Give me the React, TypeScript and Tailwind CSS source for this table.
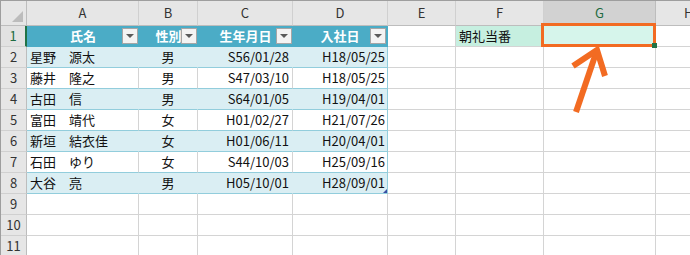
import React from "react";

const cols = ["A", "B", "C", "D", "E", "F", "G", "H"];

const rows = [
  ["星野　源太", "男", "S56/01/28", "H18/05/25"],
  ["藤井　隆之", "男", "S47/03/10", "H18/05/25"],
  ["古田　信", "男", "S64/01/05", "H19/04/01"],
  ["富田　靖代", "女", "H01/02/27", "H21/07/26"],
  ["新垣　結衣佳", "女", "H01/06/11", "H20/04/01"],
  ["石田　ゆり", "女", "S44/10/03", "H25/09/16"],
  ["大谷　亮", "男", "H05/10/01", "H28/09/01"],
];

const headers = ["氏名", "性別", "生年月日", "入社日"];

function FilterButton() {
  return (
    <span className="absolute right-[1px] top-[2px] w-[16px] h-[16px] flex items-center justify-center bg-[#f3f3f3] border border-[#a6a6a6]">
      <span className="w-0 h-0 border-l-[4px] border-r-[4px] border-t-[4px] border-l-transparent border-r-transparent border-t-[#5a5a5a]" />
    </span>
  );
}

function Blank({ last }: { last?: boolean }) {
  return <div className={last ? "border-b border-[#d4d4d4]" : "border-r border-b border-[#d4d4d4]"} />;
}

export default function App() {
  return (
    <div
      className="relative w-[690px] h-[255px] overflow-hidden bg-white text-[13px] text-[#111]"
      style={{ fontFamily: '"Noto Sans CJK JP", "Noto Sans", sans-serif' }}
    >
      <div className="grid grid-cols-[26px_112px_59px_95px_95px_68px_88px_112px_1fr] grid-rows-[25px_repeat(11,21px)] border-t border-l border-[#9e9e9e]">
        {/* corner */}
        <div className="relative bg-[#e6e6e6] border-r border-b border-[#bdbdbd]">
          <svg className="absolute right-[3px] bottom-[3px]" width="11" height="11" viewBox="0 0 11 11">
            <polygon points="11,0 11,11 0,11" fill="#bcbcbc" />
          </svg>
        </div>

        {/* column headers */}
        {cols.map((c) => (
          <div
            key={c}
            className={
              c === "G"
                ? "flex items-center justify-center bg-[#d2d2d2] text-[#1e6b41] border-r border-b border-[#bdbdbd]"
                : c === "H"
                ? "flex items-center justify-start pl-[28px] bg-[#e6e6e6] text-[#333] border-b border-[#bdbdbd]"
                : "flex items-center justify-center bg-[#e6e6e6] text-[#333] border-r border-[#d0d0d0] border-b border-b-[#bdbdbd]"
            }
          >
            {c}
          </div>
        ))}

        {/* row 1 */}
        <div className="flex items-center justify-center bg-[#e2e2e2] text-[#1e6b41] border-b border-[#d0d0d0] border-r-2 border-r-[#217346]">
          1
        </div>
        {headers.map((h, i) => (
          <div
            key={h}
            className={
              "relative flex items-center justify-center bg-[#4bacc6] font-bold text-white border-b border-[#4bacc6] " +
              (i === 3 ? "border-r border-r-[#4bacc6]" : "")
            }
          >
            {h}
            <FilterButton />
          </div>
        ))}
        <Blank />
        <div className="flex items-center pl-[3px] bg-[#c6efe0] border-r border-b border-[#d4d4d4]">朝礼当番</div>
        <div className="relative bg-[#d6f5eb] border-r border-b border-[#d4d4d4]" />
        <Blank last />

        {/* data rows */}
        {rows.map((r, i) => {
          const band = i % 2 === 0;
          const bg = band ? "bg-[#daeef3]" : "bg-white";
          const inner = band ? "border-r border-r-[#daeef3]" : "border-r border-r-[#d4d4d4]";
          return (
            <React.Fragment key={i}>
              <div className="flex items-center justify-center bg-[#e6e6e6] text-[#333] border-b border-[#d0d0d0] border-r border-r-[#bdbdbd]">
                {i + 2}
              </div>
              <div className={`flex items-center pl-[3px] whitespace-nowrap ${bg} ${inner} border-b border-b-[#92cddc]`}>
                {r[0]}
              </div>
              <div className={`flex items-center justify-center ${bg} ${inner} border-b border-b-[#92cddc]`}>
                {r[1]}
              </div>
              <div className={`flex items-center justify-end pr-[3px] ${bg} ${inner} border-b border-b-[#92cddc]`}>
                {r[2]}
              </div>
              <div className={`relative flex items-center justify-end pr-[2px] ${bg} border-r border-r-[#92cddc] border-b border-b-[#92cddc]`}>
                {r[3]}
                {i === 6 && (
                  <svg className="absolute right-0 bottom-0" width="4" height="4" viewBox="0 0 4 4">
                    <polygon points="4,0 4,4 0,4" fill="#3a4fa3" />
                  </svg>
                )}
              </div>
              <Blank />
              <Blank />
              <Blank />
              <Blank last />
            </React.Fragment>
          );
        })}

        {/* empty rows */}
        {[9, 10, 11].map((n) => (
          <React.Fragment key={n}>
            <div className="flex items-center justify-center bg-[#e6e6e6] text-[#333] border-b border-[#d0d0d0] border-r border-r-[#bdbdbd]">
              {n}
            </div>
            {cols.map((c) => (
              <Blank key={c} last={c === "H"} />
            ))}
          </React.Fragment>
        ))}
      </div>

      {/* selection outline on G1 */}
      <div className="absolute left-[541px] top-[23px] w-[115px] h-[24px] border-[3px] border-[#f26b22]" />
      <div className="absolute left-[652px] top-[43px] w-[5px] h-[5px] bg-[#217346]" />

      {/* arrow */}
      <svg className="absolute left-0 top-0 pointer-events-none" width="690" height="255" viewBox="0 0 690 255">
        <g stroke="#f26b22" strokeWidth="6" fill="none" strokeLinejoin="miter">
          <line x1="576" y1="112" x2="596" y2="53" />
          <polyline points="573,66 597,50 605,76" />
        </g>
      </svg>
    </div>
  );
}
